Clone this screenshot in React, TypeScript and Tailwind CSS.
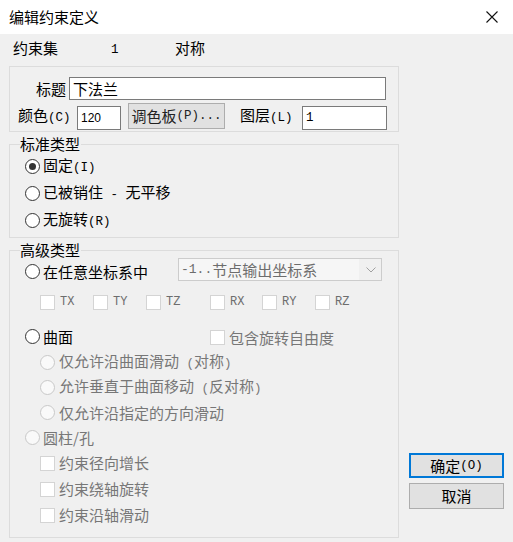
import React from "react";

function T({ s }: { s: string }) {
  const parts = s.split(/([\x20-\x7E]+)/).filter((p) => p.length > 0);
  return (
    <>
      {parts.map((p, i) =>
        /^[\x20-\x7E]+$/.test(p) ? (
          <span key={i} className="font-['Liberation_Mono',monospace] text-[12.5px] whitespace-pre">
            {p}
          </span>
        ) : (
          <span key={i}>{p}</span>
        )
      )}
    </>
  );
}

function Radio({ checked, disabled }: { checked?: boolean; disabled?: boolean }) {
  return (
    <span
      className={
        "w-[15px] h-[15px] rounded-full border flex items-center justify-center shrink-0 " +
        (disabled ? "border-[#c8c8c8] bg-[#f9f9f9]" : "border-[#333333] bg-white")
      }
    >
      {checked ? <span className="w-[7px] h-[7px] rounded-full bg-[#333333]" /> : null}
    </span>
  );
}

function Check() {
  return <span className="w-[15px] h-[15px] border border-[#d4d4d4] bg-white shrink-0" />;
}

function Ax({ s }: { s: string }) {
  return <span className="ml-[5px] font-['Liberation_Mono',monospace] text-[12px]">{s}</span>;
}

export default function App() {
  const dis = "text-[#777777]";
  return (
    <div className="w-[513px] h-[542px] bg-[#f0f0f0] flex flex-col font-['Noto_Sans_CJK_SC',sans-serif] text-[15px] leading-[18px] text-black overflow-hidden">
      {/* title bar */}
      <div className="h-[34px] bg-white flex items-center pl-[9px] shrink-0">
        <span>编辑约束定义</span>
        <svg className="ml-auto mr-[15px]" width="12" height="12" viewBox="0 0 12 12">
          <path d="M0.5 0.5 L11.5 11.5 M11.5 0.5 L0.5 11.5" stroke="#111" strokeWidth="1.1" fill="none" />
        </svg>
      </div>

      <div className="flex flex-row flex-1">
        {/* left column */}
        <div className="ml-[9px] w-[390px] flex flex-col pb-[4px]">
          {/* header */}
          <div className="h-[28px] mb-[4px] flex items-center pl-[4px]">
            <span className="w-[98px]">约束集</span>
            <span className="w-[64px]">
              <T s="1" />
            </span>
            <span>对称</span>
          </div>

          {/* box 1 */}
          <div className="h-[66px] border border-[#dcdcdc] pt-[10px] flex flex-col">
            <div className="flex items-center h-[23px]">
              <span className="w-[56px] text-right">标题</span>
              <div className="ml-[3px] w-[317px] h-[23px] border border-[#7a7a7a] bg-white pl-[3px] flex items-center">
                下法兰
              </div>
            </div>
            <div className="mt-[6px] flex items-start h-[24px]">
              <span className="ml-[8px] w-[59px]">
                <T s="颜色(C)" />
              </span>
              <div className="w-[44px] h-[24px] border border-[#7a7a7a] bg-white pl-[3px] flex items-center">
                <span className="font-['Liberation_Sans',sans-serif] text-[12px]">120</span>
              </div>
              <div className="ml-[7px] -mt-[3px] w-[97px] h-[26px] border border-[#adadad] bg-[#e1e1e1] flex items-center justify-center text-[#222]">
                <T s="调色板(P)..." />
              </div>
              <span className="ml-[15px] w-[62px]">
                <T s="图层(L)" />
              </span>
              <div className="w-[85px] h-[24px] border border-[#7a7a7a] bg-white pl-[3px] flex items-center">
                <T s="1" />
              </div>
            </div>
          </div>

          {/* group 2 */}
          <div className="relative mt-[12px] h-[94px] border border-[#dcdcdc] pt-[8px] flex flex-col">
            <span className="absolute left-[10px] -top-[10px] bg-[#f0f0f0] pr-[1px]">标准类型</span>
            <div className="h-[27px] flex items-center pl-[15px]">
              <Radio checked />
              <span className="ml-[3px]">
                <T s="固定(I)" />
              </span>
            </div>
            <div className="h-[27px] flex items-center pl-[15px]">
              <Radio />
              <span className="ml-[3px]">
                <T s="已被销住 - 无平移" />
              </span>
            </div>
            <div className="h-[27px] flex items-center pl-[15px]">
              <Radio />
              <span className="ml-[3px]">
                <T s="无旋转(R)" />
              </span>
            </div>
          </div>

          {/* group 3 */}
          <div className="relative mt-[12px] h-[288px] border border-[#dcdcdc] pt-[7px] flex flex-col">
            <span className="absolute left-[10px] -top-[10px] bg-[#f0f0f0] pr-[1px]">高级类型</span>
            <div className="h-[27px] flex items-start">
              <div className="w-[168px] h-[27px] flex items-center pl-[15px]">
                <Radio />
                <span className="ml-[3px]">在任意坐标系中</span>
              </div>
              <div className="w-[204px] h-[23px] border border-[#cccccc] bg-[#f0f0f0] flex items-center">
                <div className="w-[180px] h-full bg-[#f6f6f6] flex items-center pl-[2px] text-[#6d6d6d]">
                  <span className="font-['Liberation_Mono',monospace] text-[13px] whitespace-pre">-1..</span>
                  <span>节点输出坐标系</span>
                </div>
                <svg className="ml-[7px]" width="10" height="6" viewBox="0 0 10 6">
                  <path d="M0.5 0.5 L5 5 L9.5 0.5" stroke="#a0a0a0" strokeWidth="1" fill="none" />
                </svg>
              </div>
            </div>
            <div className="mt-[7px] h-[20px] flex items-center pl-[30px] text-[#6d6d6d]">
              <div className="w-[53px] flex items-center">
                <Check />
                <Ax s="TX" />
              </div>
              <div className="w-[53px] flex items-center">
                <Check />
                <Ax s="TY" />
              </div>
              <div className="w-[64px] flex items-center">
                <Check />
                <Ax s="TZ" />
              </div>
              <div className="w-[52px] flex items-center">
                <Check />
                <Ax s="RX" />
              </div>
              <div className="w-[53px] flex items-center">
                <Check />
                <Ax s="RY" />
              </div>
              <div className="flex items-center">
                <Check />
                <Ax s="RZ" />
              </div>
            </div>
            <div className="mt-[11px] h-[27px] flex items-center">
              <div className="w-[200px] flex items-center pl-[15px]">
                <Radio />
                <span className="ml-[3px]">曲面</span>
              </div>
              <div className={"flex items-center mt-[2px] " + dis}>
                <Check />
                <span className="ml-[4px]">包含旋转自由度</span>
              </div>
            </div>
            <div className={"h-[25px] flex items-center pl-[30px] " + dis}>
              <Radio disabled />
              <span className="ml-[4px]">
                <T s="仅允许沿曲面滑动 (对称)" />
              </span>
            </div>
            <div className={"h-[25px] flex items-center pl-[30px] " + dis}>
              <Radio disabled />
              <span className="ml-[4px]">
                <T s="允许垂直于曲面移动 (反对称)" />
              </span>
            </div>
            <div className={"h-[25px] flex items-center pl-[30px] " + dis}>
              <Radio disabled />
              <span className="ml-[4px]">仅允许沿指定的方向滑动</span>
            </div>
            <div className={"h-[25px] flex items-center pl-[15px] " + dis}>
              <Radio disabled />
              <span className="ml-[3px]">圆柱/孔</span>
            </div>
            <div className={"h-[26px] flex items-center pl-[30px] " + dis}>
              <Check />
              <span className="ml-[4px]">约束径向增长</span>
            </div>
            <div className={"h-[26px] flex items-center pl-[30px] " + dis}>
              <Check />
              <span className="ml-[4px]">约束绕轴旋转</span>
            </div>
            <div className={"h-[26px] flex items-center pl-[30px] " + dis}>
              <Check />
              <span className="ml-[4px]">约束沿轴滑动</span>
            </div>
          </div>
        </div>

        {/* right column */}
        <div className="ml-[10px] w-[95px] flex flex-col justify-end pb-[33px]">
          <div className="h-[25px] border-2 border-[#0078d7] bg-[#e1e1e1] flex items-center justify-center">
            <T s="确定(O)" />
          </div>
          <div className="mt-[5px] h-[26px] border border-[#adadad] bg-[#e1e1e1] flex items-center justify-center">
            取消
          </div>
        </div>
      </div>
    </div>
  );
}
